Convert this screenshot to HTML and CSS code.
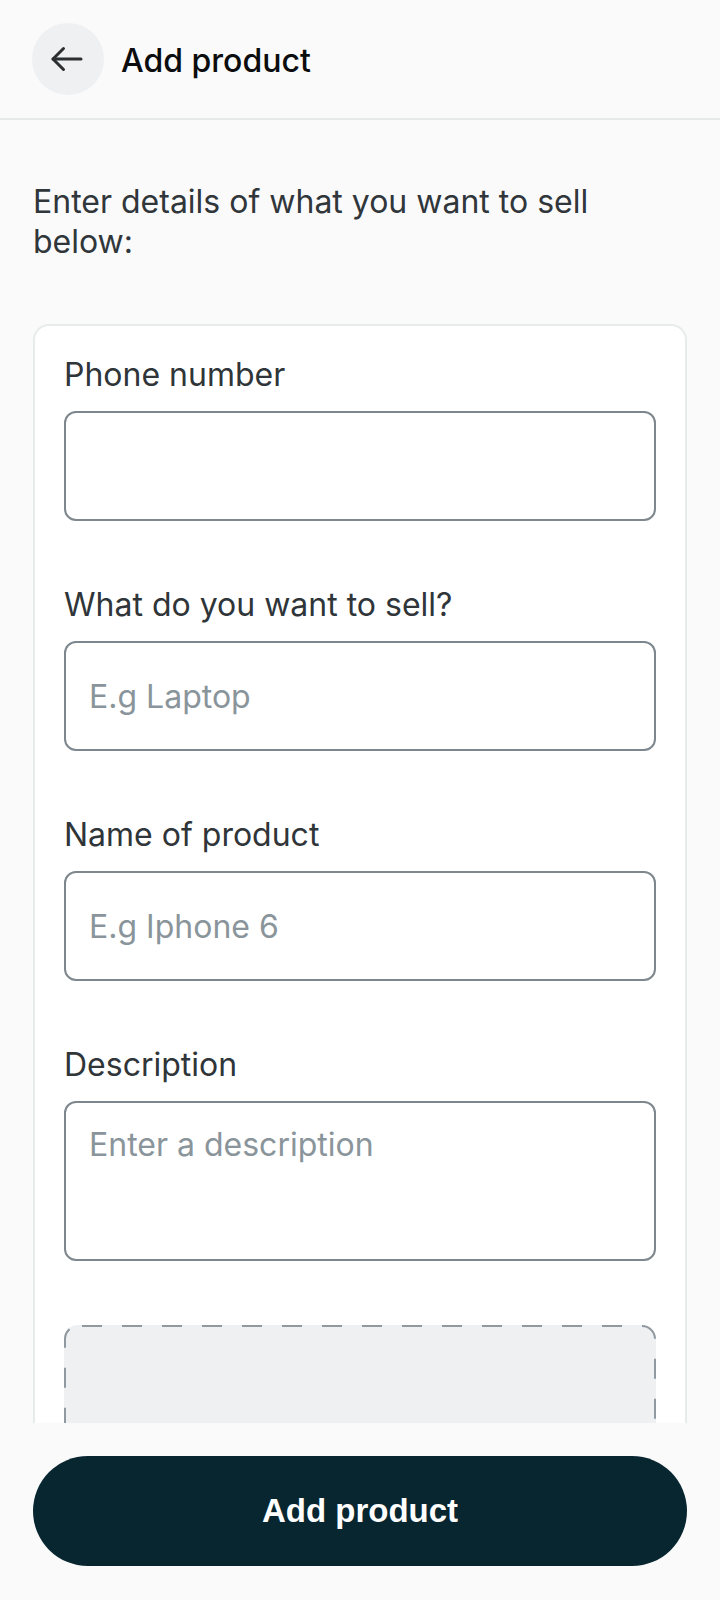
FILE: index.html
```html
<!DOCTYPE html>
<html lang="en">
<head>
<meta charset="utf-8">
<title>Add product</title>
<link rel="stylesheet" href="styles.css">
</head>
<body>
<header class="topbar">
  <button class="back-btn" aria-label="Back">
    <svg width="34" height="26" viewBox="0 0 34 26" fill="none" stroke="#2b2f31" stroke-width="3" stroke-linecap="round" stroke-linejoin="round">
      <path d="M3 13H31"/>
      <path d="M13.5 2.5L3 13l10.5 10.5"/>
    </svg>
  </button>
  <h1 class="title">Add product</h1>
</header>
<main class="content">
  <p class="intro">Enter details of what you want to sell below:</p>
  <form class="card">
    <div class="field">
      <label class="label" for="phone">Phone number</label>
      <input class="input" id="phone" type="tel">
    </div>
    <div class="field">
      <label class="label" for="what">What do you want to sell?</label>
      <input class="input" id="what" type="text" placeholder="E.g Laptop">
    </div>
    <div class="field">
      <label class="label" for="name">Name of product</label>
      <input class="input" id="name" type="text" placeholder="E.g Iphone 6">
    </div>
    <div class="field">
      <label class="label" for="desc">Description</label>
      <textarea class="input textarea" id="desc" placeholder="Enter a description"></textarea>
    </div>
    <div class="upload">
      <svg class="upload-border" aria-hidden="true"><rect></rect></svg>
    </div>
  </form>
</main>
<footer class="bottombar">
  <button class="submit" type="button">Add product</button>
</footer>
</body>
</html>
```
FILE: styles.css
```css
* { box-sizing: border-box; }
html, body { margin: 0; padding: 0; }
body {
  background: #fafafa;
  font-family: "Inter", "Noto Sans", sans-serif;
  color: #2f3538;
  min-height: 1600px;
}
.topbar {
  height: 120px;
  display: flex;
  align-items: center;
  gap: 17px;
  padding: 0 32px;
  border-bottom: 2px solid #e7eaea;
}
.back-btn {
  width: 72px;
  height: 72px;
  border-radius: 50%;
  border: none;
  background: #eff0f2;
  display: flex;
  align-items: center;
  justify-content: center;
  padding: 0 2px 0 0;
}
.title {
  margin: 2px 0 0;
  font-size: 32px;
  font-weight: 500;
  color: #0c0d0e;
}
.content {
  padding: 0 33px 200px;
}
.intro {
  margin: 62px 0 62px;
  font-size: 32px;
  line-height: 40px;
  color: #30363a;
}
.card {
  background: #ffffff;
  border: 2px solid #e8ebeb;
  border-radius: 16px;
  padding: 29px 29px 40px;
  display: flex;
  flex-direction: column;
  gap: 64px;
}
.field {
  display: flex;
  flex-direction: column;
  gap: 16px;
}
.label {
  font-size: 32px;
  line-height: 40px;
  color: #2f3538;
}
.input {
  display: block;
  width: 100%;
  height: 110px;
  border: 2px solid #7d878d;
  border-radius: 12px;
  background: #fff;
  padding: 0 23px;
  font-family: "Inter", "Noto Sans", sans-serif;
  font-size: 32px;
  color: #2f3538;
  outline: none;
}
.input::placeholder { color: #8a959b; }
.textarea {
  height: 160px;
  padding: 22px 23px;
  line-height: 40px;
  resize: none;
}
.upload {
  position: relative;
  height: 260px;
  border-radius: 14px;
  background: #eff0f2;
}
.upload-border {
  position: absolute;
  inset: 0;
  width: 100%;
  height: 100%;
  overflow: visible;
}
.upload-border rect {
  x: 1px;
  y: 1px;
  width: calc(100% - 2px);
  height: calc(100% - 2px);
  rx: 13px;
  fill: none;
  stroke: #8f999f;
  stroke-width: 2;
  stroke-dasharray: 20 20;
  stroke-dashoffset: -4;
}
.bottombar {
  position: fixed;
  left: 0;
  right: 0;
  bottom: 0;
  height: 177px;
  background: #fafafa;
  padding: 33px 33px 0;
}
.submit {
  width: 100%;
  height: 110px;
  border: none;
  border-radius: 55px;
  background: #082630;
  color: #ffffff;
  font-family: "Liberation Sans", Arial, sans-serif;
  font-weight: 700;
  font-size: 33px;
}
```
